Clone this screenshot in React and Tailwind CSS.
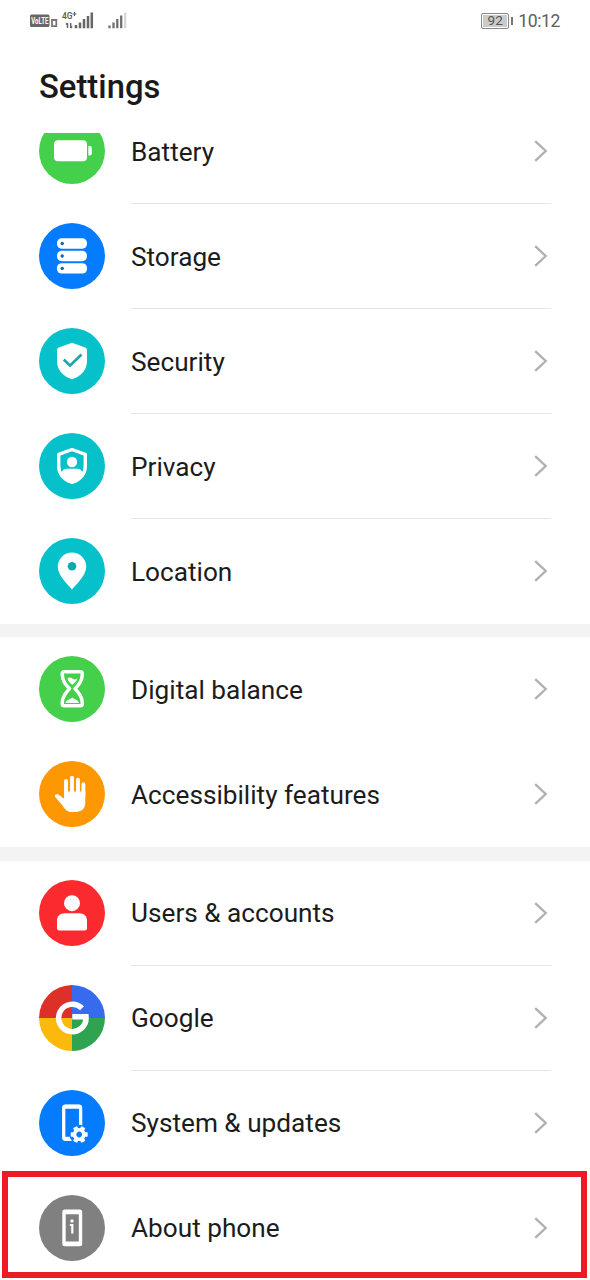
import React from "react";

const Battery = () => (
  <g fill="#fff">
    <rect x="15" y="22.300" width="33" height="21" rx="4" />
    <path d="M49.300 28H51a1.800 1.800 0 0 1 1.800 1.800v6a1.800 1.800 0 0 1-1.800 1.800H49.300z" />
  </g>
);

const Storage = () => (
  <g>
    {[15.3, 27.8, 40.2].map((y) => (
      <g key={y}>
        <rect x="18" y={y} width="30" height="10.4" rx="4.6" fill="#fff" />
        <circle cx="23.2" cy={y + 5.2} r="1.7" fill="#1f5fb0" />
      </g>
    ))}
  </g>
);

const Security = () => (
  <g>
    <path d="M33 14.800 46.300 19.600Q48 20.300 48 22.200V33C48 42 42 48.300 33 51.300 24 48.300 18 42 18 33V22.200Q18 20.300 19.700 19.600Z" fill="#fff" />
    <path d="m24.800 31.500 6.200 6.200L42.500 26.500" fill="none" stroke="#20a5a8" strokeWidth="2.700" />
  </g>
);

const Privacy = () => (
  <g>
    <path d="M33 16.500 46.300 21.300V33C46.300 41.500 41 46.500 33 49.500 25 46.500 19.700 41.500 19.700 33V21.300Z" fill="none" stroke="#fff" strokeWidth="3.400" strokeLinejoin="round" />
    <circle cx="33" cy="29" r="5.200" fill="#fff" />
    <path d="M22 41.500C22.500 37.500 25 35.800 28 35.800H38C41 35.800 43.500 37.500 44 41.500 41 46 37 49 33 50.500 29 49 25 46 22 41.500Z" fill="#fff" />
  </g>
);

const Location = () => (
  <g>
    <path d="M33 51.500C27 44.500 18.800 37 18.800 28.500A14.200 13.900 0 0 1 47.200 28.500C47.200 37 39 44.500 33 51.500Z" fill="#fff" />
    <circle cx="33" cy="28.300" r="4.300" fill="#12a9ae" />
  </g>
);

const Hourglass = () => (
  <g>
    <path d="M25 15.700H41.500Q43.300 15.700 43.300 18C43.300 25 39.500 29 36 32.700 39.500 36.500 43.300 40.500 43.300 47.500Q43.300 49.700 41.500 49.700H25Q23.200 49.700 23.200 47.500C23.200 40.500 27 36.500 30.500 32.700 27 29 23.200 25 23.200 18Q23.200 15.700 25 15.700Z" fill="none" stroke="#fff" strokeWidth="3.500" strokeLinejoin="round" />
    <path d="M28.500 22.500Q31 20.500 33.300 22.500T38.300 22.500C37.500 25.500 35.500 27 33.300 28.800 31 27 29 25.500 28.500 22.500Z" fill="#fff" />
    <path d="M26.500 47C27.500 43.500 31 43.500 33.300 41.500 35.500 43.500 39 43.500 40 47Z" fill="#fff" />
  </g>
);

const Hand = () => (
  <g fill="none" stroke="#fff" strokeLinecap="round" strokeLinejoin="round">
    <path d="M27 32V20M33 32V16.800M39 32V18.600M44.400 35V23.300" strokeWidth="3.900" />
    <path d="M25.100 30.500H46.300V41.500C46.300 47.500 42.500 51 37 51H33C28 51 26 48.500 23.500 44.500L16.200 36C15 33.800 17.500 32.600 19.800 33.800L25.100 37.800Z" fill="#fff" stroke="none" />
  </g>
);

const User = () => (
  <g fill="#fff">
    <circle cx="33" cy="23.200" r="8" />
    <path d="M18 41C18 36 21 33.300 26 33.300H40C45 33.300 48 36 48 41V48Q48 50.500 45.500 50.500H20.500Q18 50.500 18 48Z" />
  </g>
);

const Google = () => (
  <g>
    <path d="M0 0H33V33H0Z" fill="#dc3028" />
    <path d="M33 0H66V33H33Z" fill="#376bed" />
    <path d="M0 33H33V66H0Z" fill="#fbb90c" />
    <path d="M33 33H66V66H33Z" fill="#2fa450" />
    <path d="M43 23.200A13.700 13.700 0 1 0 47 31.700H33.300" fill="none" stroke="#fff" strokeWidth="5.500" />
  </g>
);

const System = () => (
  <g>
    <path d="M33 49.300H26.500Q24.700 49.300 24.700 47.500V18Q24.700 16.200 26.500 16.200H39.800Q41.600 16.200 41.600 18V36" fill="none" stroke="#fff" strokeWidth="3.300" />
    <path d="M26 16.700H40.500M26 48.800H33" stroke="#fff" strokeWidth="4" />
    <g transform="translate(40.200 44.500)">
      <circle r="9.800" fill="#057bfd" />
      <circle r="4.700" fill="none" stroke="#fff" strokeWidth="3.600" />
      {[30, 90, 150, 210, 270, 330].map((a) => (
        <rect key={a} x="-2.300" y="-8.500" width="4.600" height="4" rx="0.900" fill="#fff" transform={`rotate(${a})`} />
      ))}
    </g>
  </g>
);

const Phone = () => (
  <g>
    <path fillRule="evenodd" fill="#fff" d="M25.800 14.500H40.700Q43.200 14.500 43.200 17V48.700Q43.200 51.200 40.700 51.200H25.800Q23.300 51.200 23.300 48.700V17Q23.300 14.500 25.800 14.500ZM26.700 19.200V46.500H39.800V19.200Z" />
    <circle cx="33" cy="26" r="1.700" fill="#fff" />
    <path d="M30.800 30H33.300V38.500" fill="none" stroke="#fff" strokeWidth="2.200" />
  </g>
);

const groups = [
  [
    { label: "Battery", color: "bg-[#45d04b]", Icon: Battery, line: true },
    { label: "Storage", color: "bg-[#057bfd]", Icon: Storage, line: true },
    { label: "Security", color: "bg-[#06c0ca]", Icon: Security, line: true },
    { label: "Privacy", color: "bg-[#06c0ca]", Icon: Privacy, line: true },
    { label: "Location", color: "bg-[#06c0ca]", Icon: Location },
  ],
  [
    { label: "Digital balance", color: "bg-[#45d04b]", Icon: Hourglass },
    { label: "Accessibility features", color: "bg-[#fd9803]", Icon: Hand },
  ],
  [
    { label: "Users & accounts", color: "bg-[#fb2a2e]", Icon: User, line: true },
    { label: "Google", color: "bg-white", Icon: Google, line: true },
    { label: "System & updates", color: "bg-[#057bfd]", Icon: System },
    { label: "About phone", color: "bg-[#808080]", Icon: Phone },
  ],
];

function Row({ label, color, Icon, line }) {
  return (
    <li className="flex h-[105px] px-[39px]">
      <div className="flex h-[104px] shrink-0 items-center">
        <div className={`size-[66px] overflow-hidden rounded-full ${color}`}>
          <svg viewBox="0 0 66 66" className="size-full">
            <Icon />
          </svg>
        </div>
      </div>
      <div className={`ml-[26px] flex flex-1 items-center justify-between border-b ${line ? "border-[#e5e5e5]" : "border-transparent"}`}>
        <span className="pt-[1.6px] text-[26.2px] leading-[26px] text-[#1c1c1c]">{label}</span>
        <svg viewBox="0 0 14 22" className="mr-[3px] h-[22px] w-[14px]">
          <path d="M1.200 1.200 11.700 11 1.200 20.800" fill="none" stroke="#b0b0b0" strokeWidth="2.300" />
        </svg>
      </div>
    </li>
  );
}

function StatusBar() {
  return (
    <header className="flex h-[42px] items-center justify-between px-[30px]">
      <svg viewBox="0 0 100 24" className="h-[24px] w-[100px]" fontFamily="Roboto, sans-serif">
        <rect x="0" y="5.500" width="19.500" height="12.500" rx="1.500" fill="#686868" />
        <text x="1.300" y="15" fontSize="8.500" fontWeight="700" fill="#fff" textLength="17" lengthAdjust="spacingAndGlyphs">VoLTE</text>
        <path d="M22 11H26.300V17.200H22Z" fill="none" stroke="#777" strokeWidth="1.800" />
        <path d="M42.500 5H46.500M44.500 3V7" stroke="#666" strokeWidth="1.200" />
        <text x="32" y="10.300" fontSize="9.500" fontWeight="600" fill="#606060" textLength="10.500" lengthAdjust="spacingAndGlyphs">4G</text>
        <path d="M37.500 14V19M36 15.500 37.500 14M40.700 14V19M40.700 19 42.200 17.500" fill="none" stroke="#666" strokeWidth="1.500" />
        <path d="M46 16V19.200M50 13.500V19.200M54 10V19.200M58 7V19.200M61.800 3.500V19.200" stroke="#666" strokeWidth="2.500" />
        <path d="M79.500 16.500V19.200M83.500 13.500V19.200M87.300 10V19.200M91.200 6.500V19.200" stroke="#707070" strokeWidth="2.300" />
        <path d="M95.200 3.500V19.200" stroke="#d6d6d6" strokeWidth="2.300" />
      </svg>
      <div className="flex items-center">
        <div className="flex h-[16px] w-[28px] items-center rounded-[2px] border border-[#888] p-px">
          <span className="flex h-full w-full items-center justify-center bg-[#cbcbcb] text-[13.5px] leading-none text-[#555]">92</span>
        </div>
        <span className="ml-[2px] h-[8px] w-[2px] bg-[#777]" />
        <span className="ml-[5px] pt-[2px] text-[17.6px] leading-none tracking-[-0.4px] text-[#606060]">10:12</span>
      </div>
    </header>
  );
}

export default function App() {
  return (
    <div className="relative flex h-[1280px] w-[590px] flex-col overflow-hidden bg-white font-[Roboto,sans-serif]">
      <StatusBar />
      <h1 className="h-[91px] shrink-0 pl-[39px] pt-[29px] text-[32.8px] font-medium leading-[32px] text-[#1a1a1a]">Settings</h1>
      <main className="min-h-0 flex-1 overflow-hidden">
        <div className="-mt-[34px]">
          {groups.map((rows, i) => (
            <ul key={i}>
              {i > 0 && <li className="h-[13.3px] bg-[#f3f3f3]" />}
              {rows.map((row) => (
                <Row key={row.label} {...row} />
              ))}
            </ul>
          ))}
        </div>
      </main>
      <div className="absolute left-[2px] top-[1171px] h-[107px] w-[585px] border-[6px] border-[#eb1c24]" />
    </div>
  );
}
